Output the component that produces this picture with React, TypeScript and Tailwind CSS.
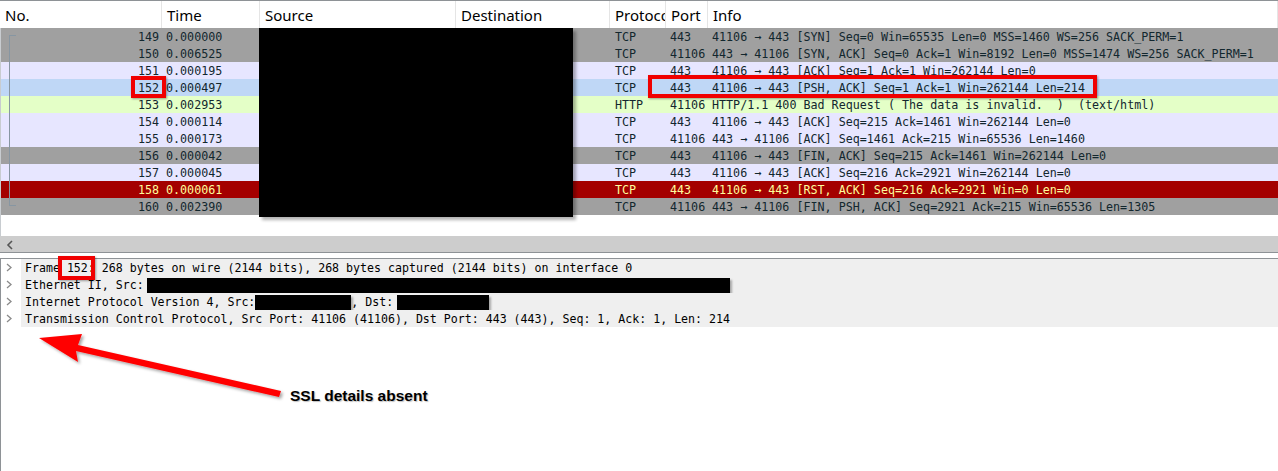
import React from 'react';

type Kind = 'gray' | 'lav' | 'sel' | 'http' | 'rst';

interface Packet {
  no: number;
  time: string;
  proto: string;
  port: string;
  info: string;
  kind: Kind;
}

const packets: Packet[] = [
  { no: 149, time: '0.000000', proto: 'TCP', port: '443', info: '41106 → 443 [SYN] Seq=0 Win=65535 Len=0 MSS=1460 WS=256 SACK_PERM=1', kind: 'gray' },
  { no: 150, time: '0.006525', proto: 'TCP', port: '41106', info: '443 → 41106 [SYN, ACK] Seq=0 Ack=1 Win=8192 Len=0 MSS=1474 WS=256 SACK_PERM=1', kind: 'gray' },
  { no: 151, time: '0.000195', proto: 'TCP', port: '443', info: '41106 → 443 [ACK] Seq=1 Ack=1 Win=262144 Len=0', kind: 'lav' },
  { no: 152, time: '0.000497', proto: 'TCP', port: '443', info: '41106 → 443 [PSH, ACK] Seq=1 Ack=1 Win=262144 Len=214', kind: 'sel' },
  { no: 153, time: '0.002953', proto: 'HTTP', port: '41106', info: 'HTTP/1.1 400 Bad Request ( The data is invalid.  )  (text/html)', kind: 'http' },
  { no: 154, time: '0.000114', proto: 'TCP', port: '443', info: '41106 → 443 [ACK] Seq=215 Ack=1461 Win=262144 Len=0', kind: 'lav' },
  { no: 155, time: '0.000173', proto: 'TCP', port: '41106', info: '443 → 41106 [ACK] Seq=1461 Ack=215 Win=65536 Len=1460', kind: 'lav' },
  { no: 156, time: '0.000042', proto: 'TCP', port: '443', info: '41106 → 443 [FIN, ACK] Seq=215 Ack=1461 Win=262144 Len=0', kind: 'gray' },
  { no: 157, time: '0.000045', proto: 'TCP', port: '443', info: '41106 → 443 [ACK] Seq=216 Ack=2921 Win=262144 Len=0', kind: 'lav' },
  { no: 158, time: '0.000061', proto: 'TCP', port: '443', info: '41106 → 443 [RST, ACK] Seq=216 Ack=2921 Win=0 Len=0', kind: 'rst' },
  { no: 160, time: '0.002390', proto: 'TCP', port: '41106', info: '443 → 41106 [FIN, PSH, ACK] Seq=2921 Ack=215 Win=65536 Len=1305', kind: 'gray' },
];

const rowColors: Record<Kind, string> = {
  gray: 'bg-[#a0a0a0] text-[#12272e]',
  lav: 'bg-[#e7e6ff] text-[#12272e]',
  sel: 'bg-[#bfd7f6] text-[#12272e]',
  http: 'bg-[#e4ffc7] text-[#12272e]',
  rst: 'bg-[#a40000] text-[#fffc9c]',
};

const headers = [
  { label: 'No.', w: 'w-[162px]' },
  { label: 'Time', w: 'w-[98px]' },
  { label: 'Source', w: 'w-[196px]' },
  { label: 'Destination', w: 'w-[154px]' },
  { label: 'Protocol', w: 'w-[56px]' },
  { label: 'Port', w: 'w-[42px]' },
  { label: 'Info', w: 'flex-1' },
];

function Chevron() {
  return (
    <svg width="20" height="17" viewBox="0 0 20 17" className="shrink-0">
      <path d="M6 5 L10 8.5 L6 12" fill="none" stroke="#8a8a8a" strokeWidth="1.3" />
    </svg>
  );
}

function Redact({ w }: { w: string }) {
  return <span className={`inline-block ${w} h-[15px] bg-black align-middle shadow-[2px_2px_2px_rgba(0,0,0,0.3)]`} />;
}

export default function App() {
  return (
    <div className="w-[1278px] h-[471px] relative overflow-hidden bg-white flex flex-col">
      {/* Column header */}
      <div className="h-[28px] border-t border-[#8e9296] flex bg-white font-['Noto_Sans',sans-serif] text-[15px] text-black shrink-0">
        {headers.map((h) => (
          <div
            key={h.label}
            className={`${h.w} shrink-0 pl-[5px] border-r border-[#e5e5e5] overflow-hidden whitespace-nowrap leading-[29px]`}
          >
            {h.label}
          </div>
        ))}
      </div>

      {/* Packet list */}
      <div className="relative border-l border-[#c8ccd0] font-['DejaVu_Sans_Mono',monospace] text-[11.7px] h-[208px] shrink-0">
        {packets.map((p) => (
          <div key={p.no} className={`h-[17px] flex leading-[18px] whitespace-pre overflow-hidden ${rowColors[p.kind]}`}>
            <div className="w-[161px] shrink-0 text-right pr-[3px]">{p.no}</div>
            <div className="w-[98px] shrink-0 pl-[4px]">{p.time}</div>
            <div className="w-[196px] shrink-0" />
            <div className="w-[154px] shrink-0" />
            <div className="w-[56px] shrink-0 pl-[5px]">{p.proto}</div>
            <div className="w-[42px] shrink-0 pl-[4px]">{p.port}</div>
            <div className="flex-1 pl-[4px]">{p.info}</div>
          </div>
        ))}

        {/* conversation bracket */}
        <div className="absolute left-[8px] top-[7px] w-[7px] h-[171px] border-l border-t border-b border-[#8796a2]" />

        {/* redaction */}
        <div className="absolute left-[258px] top-0 w-[314px] h-[189px] bg-black shadow-[3px_3px_3px_rgba(0,0,0,0.3)]" />
      </div>

      {/* horizontal scrollbar */}
      <div className="h-[16px] bg-[#cdcdcd] flex items-center pl-[6px] pt-[1px] shrink-0">
        <svg width="8" height="10" viewBox="0 0 8 10">
          <path d="M6 1 L2 5 L6 9" fill="none" stroke="#555" strokeWidth="1.6" />
        </svg>
      </div>

      {/* splitter */}
      <div className="h-[7px] border-t border-b border-[#8e9296] bg-white shrink-0" />

      {/* Packet details */}
      <div className="flex-1 border-l border-[#8e9296] font-['DejaVu_Sans_Mono',monospace] text-[11.6px] text-black">
        <div className="h-[17px] flex items-center whitespace-pre">
          <Chevron />
          <div className="flex-1 bg-[#efefef] leading-[18px] h-[17px] pl-[4px]">
            Frame 152: 268 bytes on wire (2144 bits), 268 bytes captured (2144 bits) on interface 0
          </div>
        </div>
        <div className="h-[17px] flex items-center whitespace-pre">
          <Chevron />
          <div className="flex-1 bg-[#efefef] leading-[18px] h-[17px] pl-[4px]">
            Ethernet II, Src:<span className="inline-block w-[3px]" /><Redact w="w-[583px]" />
          </div>
        </div>
        <div className="h-[17px] flex items-center whitespace-pre">
          <Chevron />
          <div className="flex-1 bg-[#efefef] leading-[18px] h-[17px] pl-[4px]">
            Internet Protocol Version 4, Src:<Redact w="w-[96px]" />, Dst:<span className="inline-block w-[4px]" /><Redact w="w-[92px]" />
          </div>
        </div>
        <div className="h-[17px] flex items-center whitespace-pre">
          <Chevron />
          <div className="flex-1 bg-[#efefef] leading-[18px] h-[17px] pl-[4px]">
            Transmission Control Protocol, Src Port: 41106 (41106), Dst Port: 443 (443), Seq: 1, Ack: 1, Len: 214
          </div>
        </div>
      </div>

      {/* annotations */}
      <div className="absolute left-[131px] top-[76px] w-[35px] h-[22px] border-[4px] border-[#f00000] shadow-[1px_1px_2px_rgba(0,0,0,0.35)]" />
      <div className="absolute left-[648px] top-[75px] w-[449px] h-[23px] border-[4px] border-[#f00000] shadow-[1px_1px_2px_rgba(0,0,0,0.35)]" />
      <div className="absolute left-[58px] top-[256px] w-[37px] h-[24px] border-[4px] border-[#f00000] shadow-[1px_1px_2px_rgba(0,0,0,0.35)]" />

      <svg className="absolute left-0 top-0" width="1278" height="471" viewBox="0 0 1278 471">
        <defs>
          <filter id="sh" x="-10%" y="-10%" width="130%" height="140%">
            <feDropShadow dx="2" dy="2" stdDeviation="1.5" floodColor="#000" floodOpacity="0.35" />
          </filter>
        </defs>
        <g filter="url(#sh)">
          <polygon
            points="39,338 82,334 78,345 281,391 279,397 76,351 78,362"
            fill="#ff0000"
          />
        </g>
      </svg>
      <div className="absolute left-[290px] top-[387px] font-['Liberation_Sans',Arial,sans-serif] font-bold text-[15.5px] leading-[18px] text-black [text-shadow:1px_1px_1px_rgba(0,0,0,0.25)]">
        SSL details absent
      </div>
    </div>
  );
}
